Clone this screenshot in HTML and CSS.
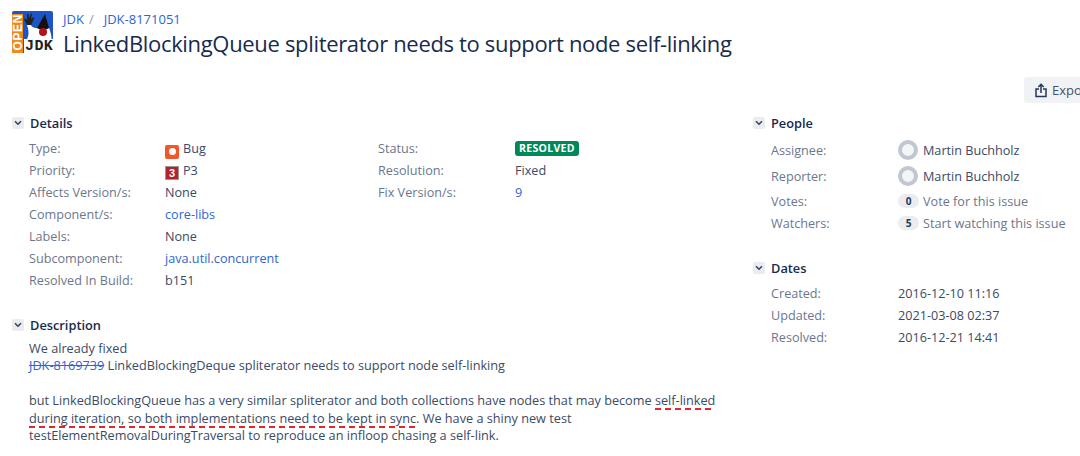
FILE: index.html
```html
<!DOCTYPE html>
<html lang="en">
<head>
  <meta charset="UTF-8">
  <title>JDK-8171051</title>
  <link rel="stylesheet" href="styles.css">
</head>
<body>
  <div class="page">
    <header class="issue-header">
      <svg class="project-logo" width="41" height="42" viewBox="0 0 41 42">
        <rect width="41" height="42" rx="2" fill="#1c55c8"/>
        <rect x="0" y="3" width="11" height="39" fill="#f08a1d"/>
        <path d="M12 42 L15 28 C17 24 17 20 15 14 L18 13 C20 16 22 17 24 17 L37 17 C40 24 40 30 40 42 Z" fill="#fff"/>
        <path d="M25 17 L33 3 L37 17 C34 19 28 19 25 17 Z" fill="#111"/>
        <circle cx="31" cy="21" r="4" fill="#b1121d"/>
        <path d="M15 14 L12 8 L13 7.500 L15 9 L15 3 L16.500 3 L17 7 L19 2.500 L20 3 L19 8 L22 6 L22.500 7 L19 14 Z" fill="#222"/>
        <rect x="12" y="28" width="29" height="14" fill="#fff"/>
        <text class="logo-open" transform="translate(9.500 39.500) rotate(-90)">OPEN</text>
        <text class="logo-jdk" x="13" y="39">JDK</text>
      </svg>
      <div class="issue-heading">
        <nav class="breadcrumbs"><a href="#">JDK</a><span class="crumb-sep">/</span><a href="#">JDK-8171051</a></nav>
        <h1>LinkedBlockingQueue spliterator needs to support node self-linking</h1>
      </div>
    </header>

    <div class="toolbar">
      <button class="export-btn">
        <svg width="12" height="15" viewBox="0 0 12 15" fill="none" stroke="#253858" stroke-width="1.5">
          <path d="M4 6H1v7.500h10V6H8"/>
          <path d="M6 10V1.500M3.300 4 6 1.300 8.700 4"/>
        </svg>
        Export
      </button>
    </div>

    <div class="issue-body">
      <main class="main-col">
        <section class="module">
          <h2 class="module-title"><span class="toggle"><svg width="8" height="6" viewBox="0 0 8 6"><path d="M1 1.200 4 4.200 7 1.200" fill="none" stroke="#344563" stroke-width="1.600"/></svg></span>Details</h2>
          <div class="details">
            <dl class="fields">
              <div class="field"><dt>Type:</dt><dd><span class="bug-icon"></span>Bug</dd></div>
              <div class="field"><dt>Priority:</dt><dd><span class="priority-icon">3</span>P3</dd></div>
              <div class="field"><dt>Affects Version/s:</dt><dd>None</dd></div>
              <div class="field"><dt>Component/s:</dt><dd><a href="#">core-libs</a></dd></div>
              <div class="field"><dt>Labels:</dt><dd>None</dd></div>
              <div class="field"><dt>Subcomponent:</dt><dd><a href="#">java.util.concurrent</a></dd></div>
              <div class="field"><dt>Resolved In Build:</dt><dd>b151</dd></div>
            </dl>
            <dl class="fields">
              <div class="field"><dt>Status:</dt><dd><span class="status-lozenge">RESOLVED</span></dd></div>
              <div class="field"><dt>Resolution:</dt><dd>Fixed</dd></div>
              <div class="field"><dt>Fix Version/s:</dt><dd><a href="#">9</a></dd></div>
            </dl>
          </div>
        </section>

        <section class="module description">
          <h2 class="module-title"><span class="toggle"><svg width="8" height="6" viewBox="0 0 8 6"><path d="M1 1.200 4 4.200 7 1.200" fill="none" stroke="#344563" stroke-width="1.600"/></svg></span>Description</h2>
          <div class="description-text">
            <p>We already fixed<br><a href="#" class="resolved-link">JDK-8169739</a> LinkedBlockingDeque spliterator needs to support node self-linking</p>
            <p>but LinkedBlockingQueue has a very similar spliterator and both collections have nodes that may become <span class="marked">self-linked during iteration, so both implementations need to be kept in sync.</span> We have a shiny new test<br>testElementRemovalDuringTraversal to reproduce an infloop chasing a self-link.</p>
          </div>
        </section>
      </main>

      <aside class="side-col">
        <section class="module">
          <h2 class="module-title"><span class="toggle"><svg width="8" height="6" viewBox="0 0 8 6"><path d="M1 1.200 4 4.200 7 1.200" fill="none" stroke="#344563" stroke-width="1.600"/></svg></span>People</h2>
          <dl class="people">
            <div class="person"><dt>Assignee:</dt><dd><span class="avatar"></span>Martin Buchholz</dd></div>
            <div class="person"><dt>Reporter:</dt><dd><span class="avatar"></span>Martin Buchholz</dd></div>
            <div class="count-row"><dt>Votes:</dt><dd><span class="badge">0</span><a href="#" class="muted-link">Vote for this issue</a></dd></div>
            <div class="count-row"><dt>Watchers:</dt><dd><span class="badge">5</span><a href="#" class="muted-link">Start watching this issue</a></dd></div>
          </dl>
        </section>
        <section class="module dates">
          <h2 class="module-title"><span class="toggle"><svg width="8" height="6" viewBox="0 0 8 6"><path d="M1 1.200 4 4.200 7 1.200" fill="none" stroke="#344563" stroke-width="1.600"/></svg></span>Dates</h2>
          <dl class="date-list">
            <div class="date-row"><dt>Created:</dt><dd>2016-12-10 11:16</dd></div>
            <div class="date-row"><dt>Updated:</dt><dd>2021-03-08 02:37</dd></div>
            <div class="date-row"><dt>Resolved:</dt><dd>2016-12-21 14:41</dd></div>
          </dl>
        </section>
      </aside>
    </div>
  </div>
</body>
</html>
```

FILE: styles.css
```css
html, body {
  margin: 0;
  height: 100%;
  overflow: hidden;
  background: #fff;
}

body {
  font-family: "Open Sans", "Noto Sans", sans-serif;
  font-size: 12.65px;
  color: #3b4a66;
}

a {
  color: #2f66d0;
  text-decoration: none;
}

dl, dd, dt, p, h1, h2 {
  margin: 0;
}

.page {
  width: 1100px;
  padding: 11px 0 0 12px;
  box-sizing: border-box;
}

.issue-header {
  display: flex;
  gap: 10px;
}

.project-logo {
  flex: none;
}

.logo-open {
  font: bold 12px "Liberation Sans", sans-serif;
  fill: #fff;
  letter-spacing: 0.6px;
}

.logo-jdk {
  font: bold 15px "Liberation Mono", monospace;
  fill: #222;
  letter-spacing: 0.4px;
}

.breadcrumbs {
  font-size: 13px;
  line-height: 17px;
}

.crumb-sep {
  color: #97a0af;
  margin: 0 10px 0 5px;
}

h1 {
  font-size: 22px;
  font-weight: 400;
  line-height: 31px;
  letter-spacing: -0.33px;
  color: #172b4d;
  white-space: nowrap;
}

.toolbar {
  display: flex;
  justify-content: flex-end;
  margin-top: 18px;
}

.export-btn {
  display: flex;
  align-items: center;
  gap: 5px;
  width: 76px;
  height: 26px;
  padding: 0 0 0 11px;
  border: none;
  border-radius: 3px;
  background: #f1f2f5;
  color: #42526e;
  font: inherit;
  font-size: 13px;
}

.issue-body {
  display: flex;
  margin-top: 11px;
}

.main-col {
  width: 741px;
  flex: none;
}

.module-title {
  display: flex;
  align-items: center;
  gap: 6px;
  font-size: 12.8px;
  font-weight: 600;
  line-height: 18px;
  color: #172b4d;
}

.toggle {
  display: flex;
  align-items: center;
  justify-content: center;
  width: 12px;
  height: 12px;
  border-radius: 2px;
  background: #ebecf0;
}

.details {
  display: flex;
  padding: 5px 0 0 17px;
}

.fields {
  width: 349px;
}

.field {
  display: flex;
  height: 22px;
  line-height: 22px;
}

.field dt {
  width: 136px;
  flex: none;
  color: #6b778c;
}

.fields + .fields .field dt {
  width: 137px;
}

.bug-icon {
  display: inline-flex;
  align-items: center;
  justify-content: center;
  width: 14px;
  height: 14px;
  margin-right: 4px;
  vertical-align: -2px;
  border-radius: 2px;
  background: #f4562b;
}

.bug-icon::after {
  content: "";
  width: 7px;
  height: 7px;
  border-radius: 50%;
  background: #fff;
}

.priority-icon {
  display: inline-block;
  width: 12px;
  height: 12px;
  margin-right: 4px;
  vertical-align: -2px;
  border: 1px solid #9a9a9a;
  background: #b3232b;
  color: #fff;
  font-family: "Liberation Sans", sans-serif;
  font-size: 11px;
  font-weight: 700;
  line-height: 12px;
  text-align: center;
}

.status-lozenge {
  display: inline-block;
  padding: 0 4px;
  border-radius: 3px;
  background: #00875a;
  color: #fff;
  font-size: 10.5px;
  font-weight: 700;
  line-height: 15px;
  letter-spacing: 0.3px;
  vertical-align: 1px;
}

.description {
  margin-top: 25px;
}

.description-text {
  padding: 5.5px 0 0 17px;
  font-size: 12.7px;
  line-height: 17.5px;
}

.description-text p + p {
  margin-top: 17.5px;
}

.resolved-link {
  text-decoration: line-through;
}

.marked {
  padding-bottom: 1px;
  background: repeating-linear-gradient(90deg, #e5262c 0 6px, transparent 6px 10px) left bottom / 100% 2px no-repeat;
}

.side-col {
  flex: 1;
}

.people {
  padding: 5px 0 0 18px;
}

.person {
  display: flex;
  align-items: center;
  height: 26px;
}

.count-row {
  display: flex;
  align-items: center;
  height: 22px;
}

.person + .count-row {
  margin-top: 1px;
}

.people dt,
.date-list dt {
  width: 127px;
  flex: none;
  color: #6b778c;
}

.people dd {
  display: flex;
  align-items: center;
}

.avatar {
  width: 12px;
  height: 12px;
  margin-right: 5px;
  border: 4px solid #c1c7d0;
  border-radius: 50%;
  background: #f4f5f7;
}

.badge {
  width: 21px;
  height: 14px;
  margin-right: 4px;
  border-radius: 7px;
  background: #ebecf0;
  color: #253858;
  font-size: 10px;
  font-weight: 700;
  line-height: 14px;
  text-align: center;
}

.muted-link {
  color: #6b778c;
}

.dates {
  margin-top: 25px;
}

.date-list {
  padding: 5px 0 0 18px;
}

.date-row {
  display: flex;
  height: 22px;
  line-height: 22px;
}
```
